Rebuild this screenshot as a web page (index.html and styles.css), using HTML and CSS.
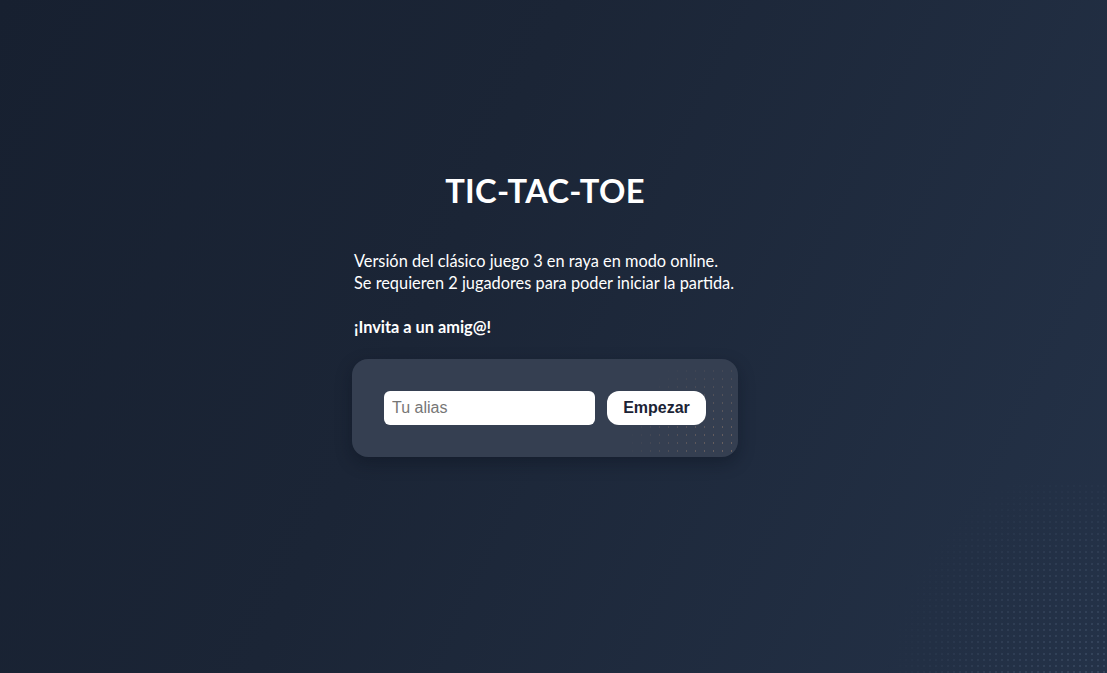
FILE: index.html
```html
<!DOCTYPE html>
<html lang="es">
<head>
<meta charset="utf-8">
<title>TIC-TAC-TOE</title>
<link rel="stylesheet" href="styles.css">
</head>
<body>
<main class="page">
  <section class="intro">
    <h1 class="title">TIC-TAC-TOE</h1>
    <p class="desc">Versión del clásico juego 3 en raya en modo online.<br>Se requieren 2 jugadores para poder iniciar la partida.</p>
    <p class="invite">¡Invita a un amig@!</p>
    <form class="card">
      <input class="alias" type="text" placeholder="Tu alias">
      <button class="start" type="button">Empezar</button>
    </form>
  </section>
</main>
</body>
</html>
```

FILE: styles.css
```css
* { box-sizing: border-box; }
html, body { margin: 0; height: 100%; }
body {
  background: linear-gradient(115deg, #172030 0%, #1b2536 40%, #243248 100%);
  font-family: "Lato", "Noto Sans", sans-serif;
  color: #ffffff;
  overflow: hidden;
  position: relative;
}
body::after {
  content: "";
  position: absolute;
  right: 0; bottom: 0;
  width: 240px; height: 190px;
  background-image: radial-gradient(circle, rgba(120,140,170,0.22) 0.7px, transparent 1.1px);
  background-size: 6px 6px;
  -webkit-mask-image: radial-gradient(circle at 100% 100%, #000 0%, rgba(0,0,0,0.6) 40%, transparent 72%);
  mask-image: radial-gradient(circle at 100% 100%, #000 0%, rgba(0,0,0,0.6) 40%, transparent 72%);
  pointer-events: none;
}
.page {
  display: flex;
  justify-content: center;
  padding: 172px 17px 0 0;
}
.intro {
  width: 386px;
}
.title {
  margin: 0;
  text-align: center;
  font-size: 32.7px;
  font-weight: 700;
  line-height: 38px;
  letter-spacing: 0.3px;
}
.desc {
  margin: 40px 0 0 2px;
  font-size: 16.35px;
  line-height: 22px;
}
.invite {
  margin: 22px 0 0 2px;
  font-size: 16.35px;
  line-height: 22px;
  font-weight: 700;
}
.card {
  margin: 21px 0 0 0;
  height: 98px;
  border-radius: 16px;
  background-color: #353f51;
  box-shadow: 0 6px 16px rgba(10, 15, 25, 0.35);
  display: flex;
  align-items: center;
  padding: 0 32px;
  gap: 12px;
  position: relative;
  overflow: hidden;
}
.card::after {
  content: "";
  position: absolute;
  right: 0; bottom: 0;
  width: 110px; height: 90px;
  background-image: radial-gradient(circle, rgba(190,150,120,0.45) 0.6px, transparent 1px);
  background-size: 9px 8px;
  -webkit-mask-image: radial-gradient(circle at 100% 100%, #000 0%, rgba(0,0,0,0.5) 45%, transparent 80%);
  mask-image: radial-gradient(circle at 100% 100%, #000 0%, rgba(0,0,0,0.5) 45%, transparent 80%);
  pointer-events: none;
}
.alias {
  width: 211px;
  height: 34px;
  border: none;
  border-radius: 6px;
  background: #ffffff;
  padding: 0 8px;
  font-family: "Liberation Sans", Arial, sans-serif;
  font-size: 16px;
  color: #222;
  outline: none;
}
.alias::placeholder { color: #767676; }
.start {
  width: 99px;
  height: 34px;
  border: none;
  border-radius: 12px;
  background: #ffffff;
  font-family: "Liberation Sans", Arial, sans-serif;
  font-size: 16px;
  font-weight: 700;
  color: #1b2335;
  cursor: pointer;
  position: relative;
  z-index: 1;
}
```
